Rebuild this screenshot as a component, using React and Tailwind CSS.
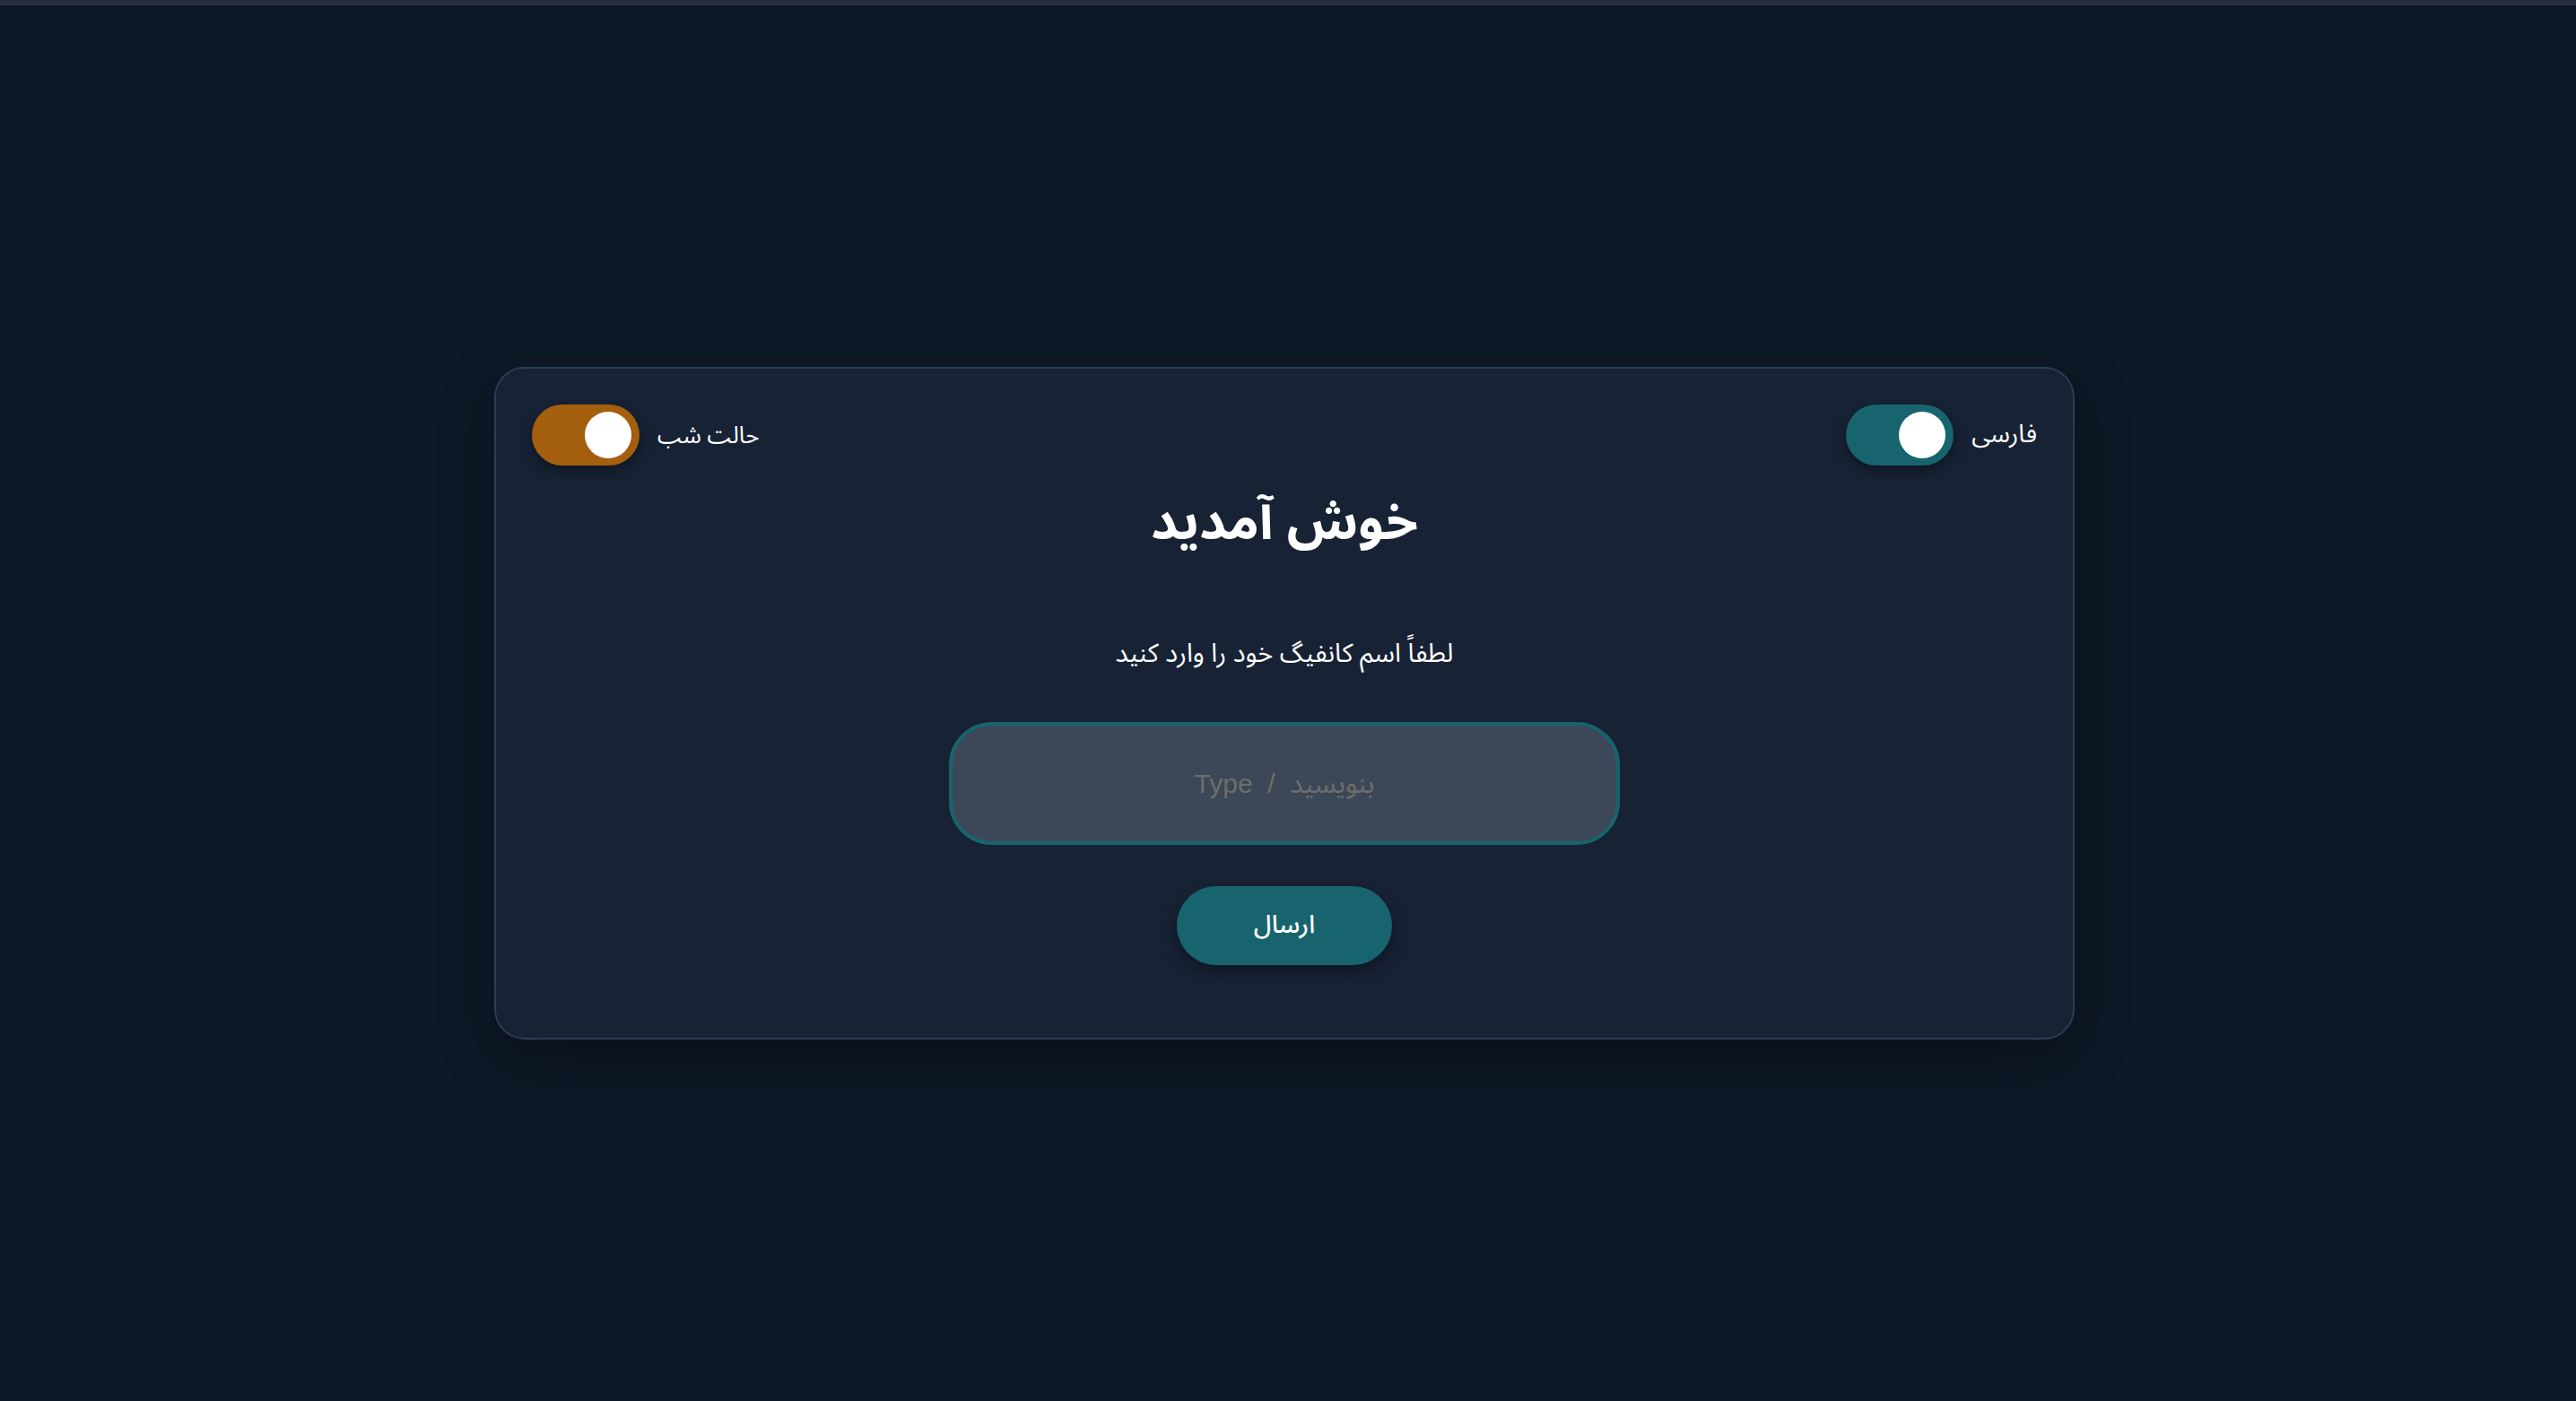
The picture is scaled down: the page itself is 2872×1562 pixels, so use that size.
import React from "react";

function Toggle({ color }) {
  return (
    <div dir="ltr" className={`flex h-[68px] w-[120px] items-center justify-end rounded-full pr-[9px] shadow-[0_6px_14px_rgba(0,0,0,0.35)] ${color}`}>
      <div className="h-[52px] w-[52px] rounded-full bg-white" />
    </div>
  );
}

export default function App() {
  const font = { fontFamily: '"Noto Sans Arabic", "DejaVu Sans", "Noto Sans", sans-serif' };
  return (
    <div className="min-h-screen bg-[#0e1927] flex flex-col" style={font}>
      <div className="h-[4px] bg-[#262d40]" />
      <div className="h-[2px] bg-[#2f3136]" />
      <div className="flex flex-1 items-center justify-center pr-[8px]">
        <div
          dir="rtl"
          className="w-[1762px] rounded-[34px] border-2 border-[#2b3c57] bg-[#172234] px-[40px] pt-[40px] pb-[81px] shadow-[0_20px_60px_rgba(0,0,0,0.35)]"
        >
          <div className="flex items-center justify-between">
            <div className="flex items-center gap-[20px]">
              <span className="text-[28px] text-white">فارسی</span>
              <Toggle color="bg-[#17646f]" />
            </div>
            <div className="flex items-center gap-[20px]">
              <span className="text-[26px] text-white">حالت شب</span>
              <Toggle color="bg-[#a35f0e]" />
            </div>
          </div>
          <h1 className="mt-[28px] text-center text-[58px] font-bold leading-[72px] text-white">خوش آمدید</h1>
          <p className="mt-[90px] text-center text-[29px] leading-[40px] text-white">لطفاً اسم کانفیگ خود را وارد کنید</p>
          <div className="mt-[56px] flex justify-center">
            <input
              type="text"
              placeholder="بنویسید  /  Type"
              dir="rtl"
              className="h-[137px] w-[748px] rounded-[48px] border-4 border-[#17646f] bg-[#3c4858] px-8 text-center text-[30px] text-white outline-none placeholder:text-[#6e6d6c]"
              style={{ fontFamily: '"Liberation Sans", "Noto Sans Arabic", "DejaVu Sans", sans-serif' }}
            />
          </div>
          <div className="mt-[46px] flex justify-center">
            <button className="h-[88px] w-[240px] rounded-full bg-[#17646f] text-[28px] font-medium text-white shadow-[0_8px_18px_rgba(0,0,0,0.35)]">
              ارسال
            </button>
          </div>
        </div>
      </div>
    </div>
  );
}
